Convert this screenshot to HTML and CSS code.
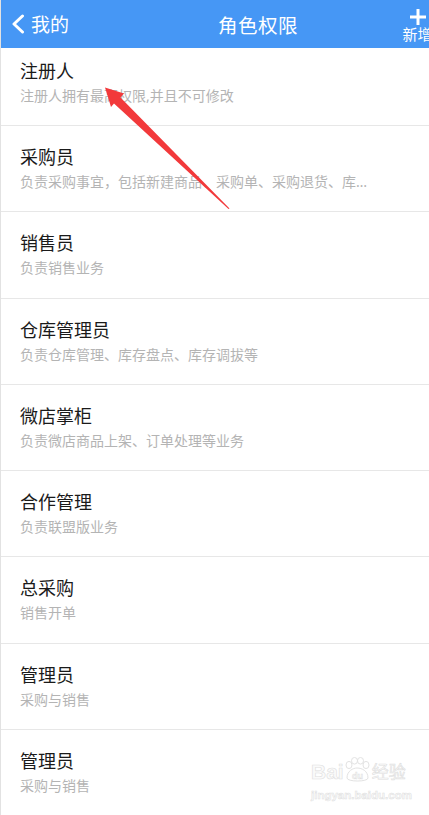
FILE: index.html
```html
<!DOCTYPE html>
<html lang="zh-CN">
  <head>
    <meta charset="UTF-8" />
    <meta name="viewport" content="width=device-width, initial-scale=1.0" />
    <title>角色权限</title>
    <link rel="stylesheet" href="styles.css">
  </head>
  <body>
    <div class="app">
      <header class="header">
        <a class="header-back">
          <svg class="back-icon" viewBox="0 0 14 20" width="14" height="20">
            <path d="M11.5 2 L3 10 L11.5 18" fill="none" stroke="#fff" stroke-width="3" stroke-linecap="round" stroke-linejoin="round" />
          </svg>
          <span>我的</span>
        </a>
        <h1 class="header-title">角色权限</h1>
        <a class="header-add">
          <svg class="add-icon" viewBox="0 0 18 18" width="18" height="18">
            <path d="M9 1 V17 M1 9 H17" fill="none" stroke="#fff" stroke-width="3" />
          </svg>
          <span>新增</span>
        </a>
      </header>

      <ul class="roles">
        <li class="role role--first">
          <p class="role-name">注册人</p>
          <p class="role-desc">注册人拥有最高权限,并且不可修改</p>
        </li>
        <li class="role">
          <p class="role-name">采购员</p>
          <p class="role-desc">负责采购事宜，包括新建商品、采购单、采购退货、库存盘点等业务</p>
        </li>
        <li class="role">
          <p class="role-name">销售员</p>
          <p class="role-desc">负责销售业务</p>
        </li>
        <li class="role">
          <p class="role-name">仓库管理员</p>
          <p class="role-desc">负责仓库管理、库存盘点、库存调拔等</p>
        </li>
        <li class="role">
          <p class="role-name">微店掌柜</p>
          <p class="role-desc">负责微店商品上架、订单处理等业务</p>
        </li>
        <li class="role">
          <p class="role-name">合作管理</p>
          <p class="role-desc">负责联盟版业务</p>
        </li>
        <li class="role">
          <p class="role-name">总采购</p>
          <p class="role-desc">销售开单</p>
        </li>
        <li class="role">
          <p class="role-name">管理员</p>
          <p class="role-desc">采购与销售</p>
        </li>
        <li class="role">
          <p class="role-name">管理员</p>
          <p class="role-desc">采购与销售</p>
        </li>
      </ul>
    </div>

    <!-- red annotation arrow drawn over the screenshot -->
    <svg class="mark-arrow" viewBox="0 0 429 815" width="429" height="815">
      <polygon points="105,87.5 124,93.5 120.5,97.5 229.5,208.5 228.5,209 114,103.5 111,107" fill="#f2393b" />
    </svg>

    <div class="watermark">
      <div class="watermark-logo">
        <span>Bai</span>
        <svg class="paw" viewBox="0 0 28 26" width="28" height="26">
          <g fill="none" stroke="#e2e2e2" stroke-width="1">
            <ellipse cx="6" cy="8" rx="3" ry="3.6" />
            <ellipse cx="11.5" cy="3.8" rx="3" ry="3.3" />
            <ellipse cx="17.5" cy="3.8" rx="3" ry="3.3" />
            <ellipse cx="23" cy="8" rx="3" ry="3.6" />
            <path d="M4 21 C4 14 10 11 14 11 C19 11 25 14 25 21 C25 25 4 25 4 21 Z" />
          </g>
          <text x="14.5" y="21.5" text-anchor="middle" class="paw-text">du</text>
        </svg>
        <span class="watermark-cn">经验</span>
      </div>
      <div class="watermark-url">jingyan.baidu.com</div>
    </div>
  </body>
</html>
```
FILE: styles.css
```css
body {
  margin: 0;
  width: 429px;
  height: 815px;
  overflow: hidden;
  background: #fff;
  font-family: "Noto Sans", "Noto Sans CJK SC", sans-serif;
}
.app {
  height: 100%;
  border-left: 1px solid #e2e2e2;
  box-sizing: border-box;
}

.header {
  height: 48px;
  background: #4697f5;
  color: #fff;
  display: flex;
  align-items: center;
  position: relative;
}
.header-back {
  display: flex;
  align-items: center;
  gap: 6px;
  padding-left: 10px;
  font-size: 19px;
}
.back-icon {
  display: block;
}
.header-title {
  flex: 1;
  margin: 0 0 0 46px;
  font-size: 19.5px;
  font-weight: 400;
  text-align: center;
  letter-spacing: 0.5px;
}
.header-add {
  display: flex;
  flex-direction: column;
  align-items: center;
  width: 33px;
  margin-right: -5px;
  font-size: 15px;
  line-height: 16px;
  white-space: nowrap;
  overflow: hidden;
  padding-top: 1px;
}
.add-icon {
  display: block;
}

.roles {
  list-style: none;
  margin: 0;
  padding: 0;
}
.role {
  height: 86.3px;
  box-sizing: border-box;
  border-bottom: 1px solid #e7e7e7;
  padding: 19px 56px 0 19px;
}
.role--first {
  height: 78px;
  padding-top: 11px;
}
.role-name {
  margin: 0;
  font-size: 18px;
  line-height: 24px;
  color: #1a1a1a;
}
.role-desc {
  margin: 3px 0 0;
  font-size: 14px;
  line-height: 20px;
  color: #b4b4b4;
  white-space: nowrap;
  overflow: hidden;
  text-overflow: ellipsis;
}

.mark-arrow {
  position: absolute;
  left: 0;
  top: 0;
}

.watermark {
  position: absolute;
  left: 311px;
  top: 757px;
  color: #fafafa;
  -webkit-text-stroke: 0.6px #dfdfdf;
}
.watermark-logo {
  display: flex;
  align-items: flex-end;
  font-family: "Liberation Sans", sans-serif;
  font-size: 21px;
  font-weight: 700;
  line-height: 24px;
}
.paw {
  display: block;
  margin: 0 1px 1px -1px;
}
.paw-text {
  font-family: "Liberation Sans", sans-serif;
  font-size: 9px;
  font-weight: 700;
  fill: #fafafa;
  stroke: #dfdfdf;
  stroke-width: 0.5px;
}
.watermark-cn {
  font-family: "Noto Sans CJK SC", sans-serif;
  font-size: 17px;
  font-weight: 400;
  margin-bottom: 1px;
}
.watermark-url {
  font-family: "Liberation Sans", sans-serif;
  font-size: 11.5px;
  font-weight: 700;
  line-height: 14px;
  margin-top: 4px;
  -webkit-text-stroke: 0.5px #dfdfdf;
}
```
